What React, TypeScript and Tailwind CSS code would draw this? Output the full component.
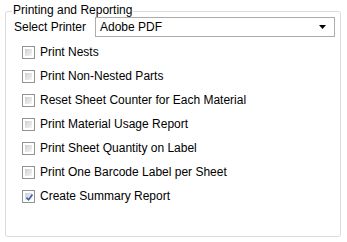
import React from "react";

const items: { label: string; checked: boolean }[] = [
  { label: "Print Nests", checked: false },
  { label: "Print Non-Nested Parts", checked: false },
  { label: "Reset Sheet Counter for Each Material", checked: false },
  { label: "Print Material Usage Report", checked: false },
  { label: "Print Sheet Quantity on Label", checked: false },
  { label: "Print One Barcode Label per Sheet", checked: false },
  { label: "Create Summary Report", checked: true },
];

function Box({ checked }: { checked: boolean }) {
  return (
    <div className="w-[13px] h-[13px] border border-[#939393] bg-white p-[2px] shrink-0">
      <div className="w-full h-full bg-gradient-to-br from-[#cbcfd5] to-[#f6f6f6] relative">
        {checked && (
          <svg viewBox="0 0 9 9" className="absolute inset-0 w-[9px] h-[9px]">
            <path d="M1.5 4.5 L3.5 6.8 L7.5 1.5" fill="none" stroke="#3c5d9b" strokeWidth="1.6" />
          </svg>
        )}
      </div>
    </div>
  );
}

export default function App() {
  return (
    <div
      className="w-[347px] h-[242px] bg-white text-[12px] text-black relative"
      style={{ fontFamily: '"Liberation Sans", Arial, sans-serif' }}
    >
      <div className="absolute left-[5px] top-[11px] w-[336px] h-[226px] border border-[#dcdcdc] rounded-[3px]" />
      <div className="relative pt-[3px] pl-[14px]">
        <div className="leading-[15px] bg-white px-[1px] -ml-[2px] w-fit">Printing and Reporting</div>
        <div className="flex items-center -mt-[1px]">
          <span className="w-[81px] leading-[15px]">Select Printer</span>
          <div className="w-[240px] h-[20px] border border-[#acacac] flex items-center pl-[4px] pr-[8px] bg-white">
            <span className="flex-1 leading-[15px]">Adobe PDF</span>
            <svg width="7" height="4" viewBox="0 0 7 4">
              <path d="M0 0 H7 L3.5 4 Z" fill="#000" />
            </svg>
          </div>
        </div>
        <div className="flex flex-col gap-[11px] mt-[9px] pl-[8px]">
          {items.map((it) => (
            <div key={it.label} className="flex items-center gap-[5px] h-[13px]">
              <Box checked={it.checked} />
              <span className="leading-[15px] whitespace-nowrap">{it.label}</span>
            </div>
          ))}
        </div>
      </div>
    </div>
  );
}
